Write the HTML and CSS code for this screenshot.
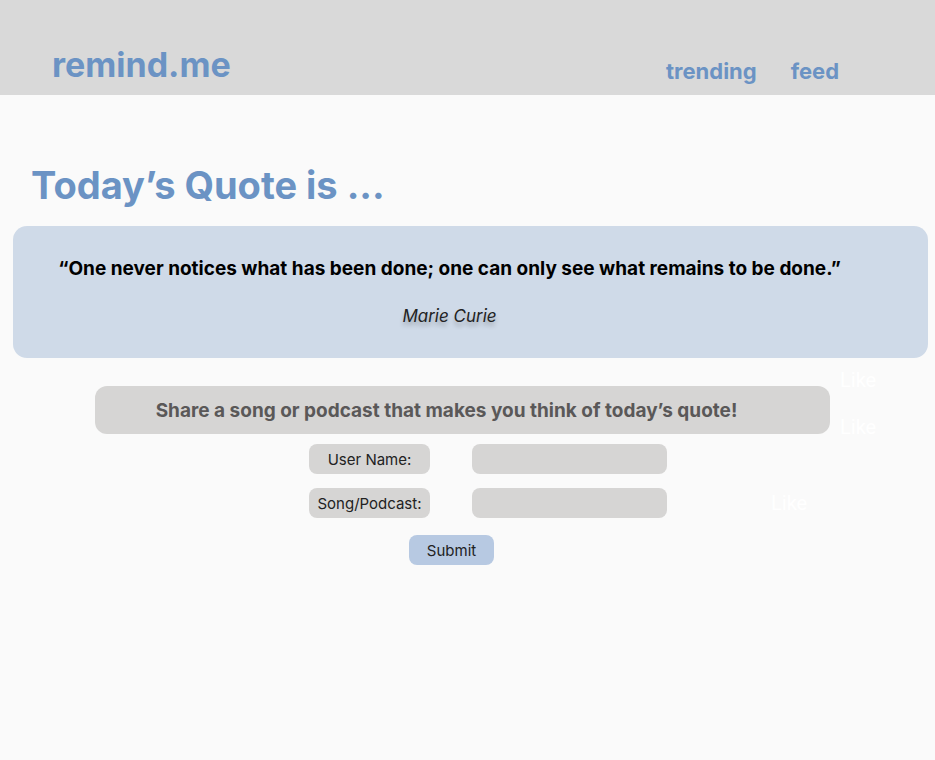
FILE: index.html
```html
<!DOCTYPE html>
<html>
<head>
<meta charset="utf-8">
<link rel="stylesheet" href="styles.css">
</head>
<body>
<header class="topbar">
  <div class="logo">remind.me</div>
  <nav class="nav">
    <a class="nav-link" href="#">trending</a>
    <a class="nav-link" href="#">feed</a>
  </nav>
</header>
<main class="main">
  <h1 class="title">Today’s Quote is ...</h1>
  <section class="quote-box">
    <p class="quote">“One never notices what has been done; one can only see what remains to be done.”</p>
    <p class="author">Marie Curie</p>
  </section>
  <section class="share">
    <div class="share-banner">Share a song or podcast that makes you think of today’s quote!</div>
    <form class="share-form">
      <div class="row">
        <label class="label">User Name:</label>
        <input class="field" type="text">
      </div>
      <div class="row">
        <label class="label">Song/Podcast:</label>
        <input class="field" type="text">
      </div>
      <button class="submit" type="button">Submit</button>
    </form>
    <span class="like like-1">Like</span>
    <span class="like like-2">Like</span>
    <span class="like like-3">Like</span>
  </section>
</main>
</body>
</html>
```

FILE: styles.css
```css
* { box-sizing: border-box; }
html, body { margin: 0; padding: 0; }
body {
  background: #fafafa;
  font-family: "Inter", "Lato", sans-serif;
  width: 935px;
  height: 760px;
  overflow: hidden;
}
.topbar {
  height: 95px;
  background: #d9d9d9;
  display: flex;
  align-items: flex-end;
  padding: 0 0 13px 52px;
}
.logo {
  color: #6b93c4;
  font-size: 34px;
  font-weight: 700;
  line-height: 1;
  width: 614px;
  margin-bottom: 0;
}
.nav { display: flex; gap: 34px; }
.nav-link {
  color: #6b93c4;
  font-size: 22px;
  font-weight: 700;
  text-decoration: none;
  line-height: 1;
}
.main { padding: 0 7px 0 13px; }
.title {
  margin: 0;
  padding: 70px 0 0 18px;
  color: #6b93c4;
  font-size: 38px;
  font-weight: 700;
  line-height: 40px;
  height: 131px;
}
.quote-box {
  background: #cfdae8;
  border-radius: 14px;
  height: 132px;
  padding: 30px 42px 0 0;
  text-align: center;
}
.quote {
  margin: 0;
  font-size: 19px;
  font-weight: 700;
  color: #000;
  line-height: 26px;
}
.author {
  margin: 24px 0 0;
  font-size: 17px;
  font-style: italic;
  color: #222;
  text-shadow: 0 4px 4px rgba(0,0,0,0.25);
}
.share {
  position: relative;
  padding-top: 28px;
}
.share-banner {
  margin-left: 82px;
  width: 735px;
  height: 48px;
  background: #d6d5d4;
  border-radius: 12px;
  color: #5a5858;
  font-size: 19px;
  font-weight: 700;
  display: flex;
  align-items: center;
  justify-content: center;
  padding-right: 32px;
}
.share-form {
  display: flex;
  flex-direction: column;
  padding: 10px 0 0 296px;
}
.row {
  display: flex;
  gap: 42px;
  margin-bottom: 14px;
}
.label {
  width: 121px;
  height: 30px;
  background: #d6d5d4;
  border-radius: 8px;
  font-size: 15px;
  color: #222;
  display: flex;
  align-items: center;
  justify-content: center;
}
.field {
  width: 195px;
  height: 30px;
  background: #d6d5d4;
  border: none;
  border-radius: 8px;
}
.submit {
  margin: 3px 0 0 100px;
  width: 85px;
  height: 30px;
  background: #b7c9e2;
  border: none;
  border-radius: 8px;
  font-family: inherit;
  font-size: 15px;
  color: #222;
}
.like {
  position: absolute;
  color: #fff;
  font-size: 20px;
  font-family: "Roboto", sans-serif;
  line-height: 1;
}
.like-1 { left: 827px; top: 12px; }
.like-2 { left: 827px; top: 59px; }
.like-3 { left: 758px; top: 135px; }
```
